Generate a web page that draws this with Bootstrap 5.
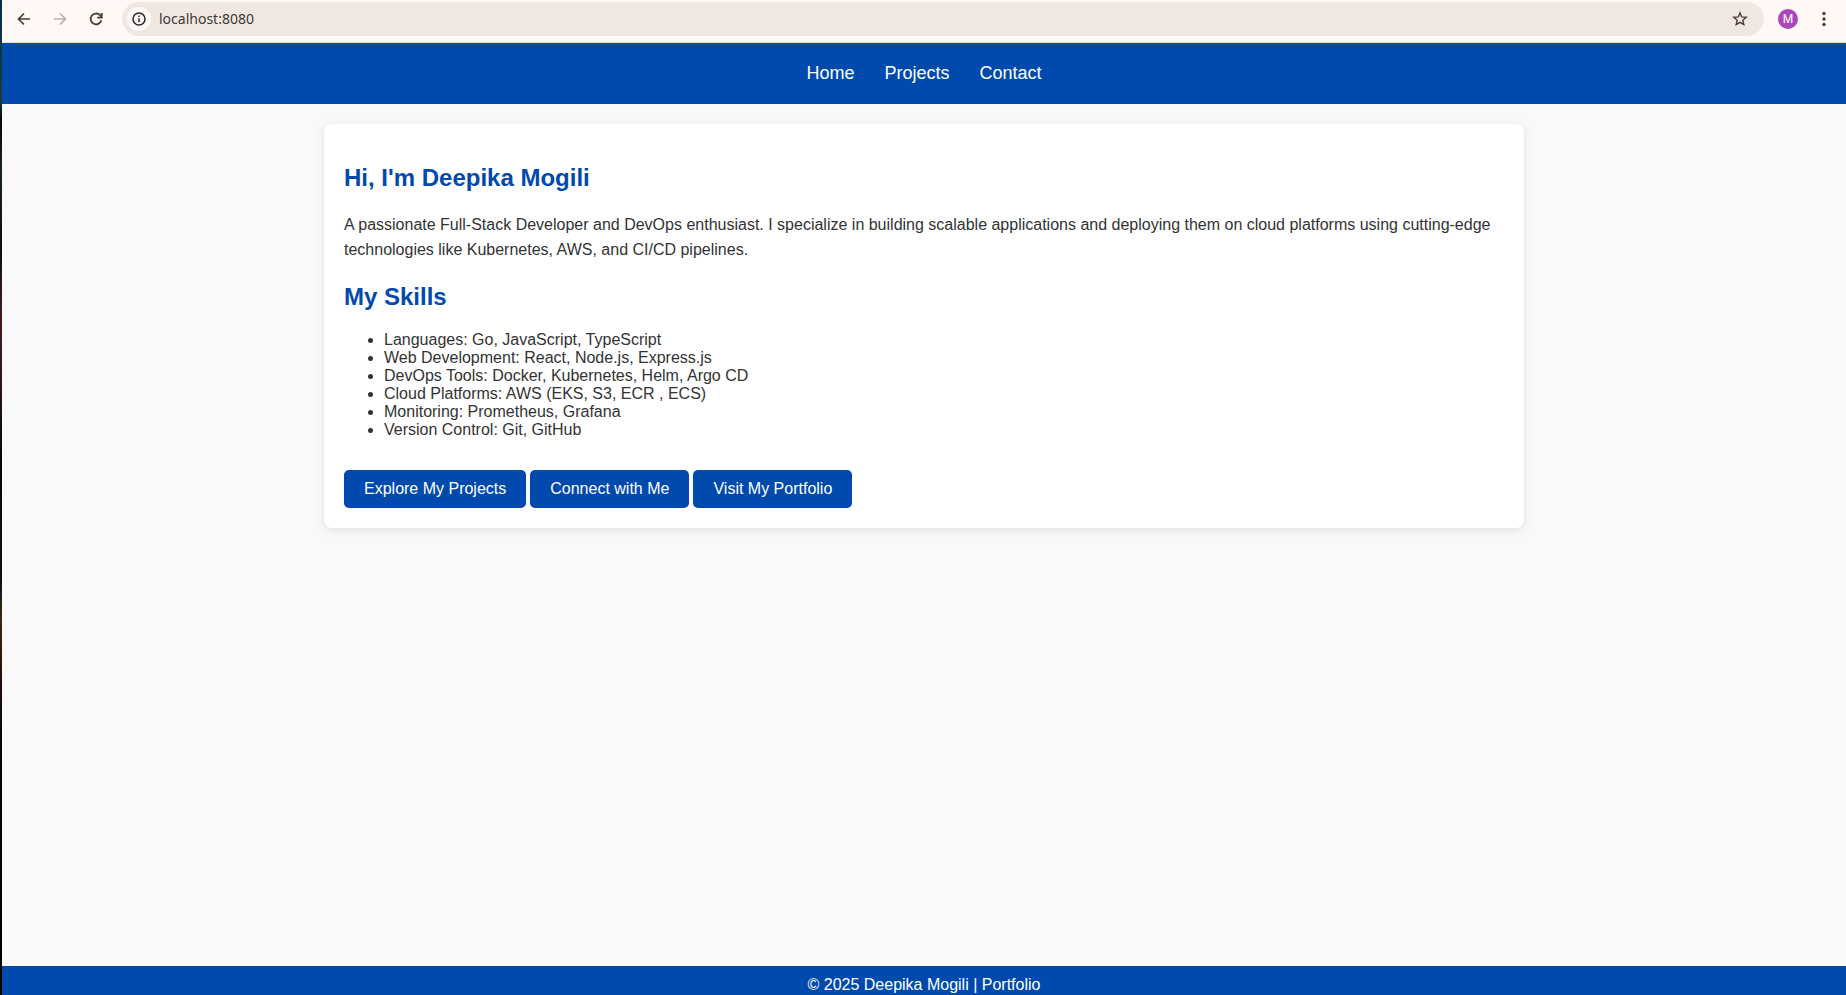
<!DOCTYPE html>
<html lang="en">
<head>
<meta charset="utf-8">
<meta name="viewport" content="width=device-width, initial-scale=1">
<title>Deepika Mogili | Portfolio</title>
<link href="https://cdn.jsdelivr.net/npm/bootstrap@5.3.0/dist/css/bootstrap.min.css" rel="stylesheet">
<style>
  :root { --brand: #004aad; --chrome: #fff8f5; --chrome-ink: #4d3d32; }
  body { font-family: "Liberation Sans", Arial, sans-serif; color: #333; background: #f9f9f9; }
  a { text-decoration: none; }

  /* Sliver of desktop along the left side of the window */
  .desktop-edge { width: 2px; background: linear-gradient(#00304f, #1d3a40 10%, #05080c 12%, #15232a 17%, #0b0f16 25%, #4a1c1c 32%, #30161a 38%, #05070c 46%, #0a0e14 58%, #3a2a10 62%, #2a0c08 68%, #05070c 74%, #000 100%); }

  /* Browser toolbar */
  .toolbar { background: var(--chrome); border-bottom: 1px solid #f0dfd2; gap: 14px; height: 43px; padding: 2px 10px 6px; color: var(--chrome-ink); }
  .tool-btn { width: 24px; height: 24px; padding: 0; border: 0; background: none; color: inherit; display: flex; align-items: center; justify-content: center; }
  .tool-btn:disabled { color: #b7aeaa; }
  .address { background: #f0e7e3; height: 34px; padding: 0 12px 0 5px; }
  .info-btn { width: 24px; height: 24px; background: var(--chrome); color: #2b2623; }
  .url { border: 0; background: none; outline: 0; padding: 0; font: 14px/20px "Noto Sans", sans-serif; color: #3f3935; }
  .avatar { width: 20px; height: 20px; background: #ab47bc; color: #fff; font: 400 12px/20px Roboto, sans-serif; }

  /* Page */
  .site-nav { background: var(--brand); padding: 20px 20px 21px; gap: 30px; font-size: 18px; line-height: 20px; }
  .site-nav a, .site-footer { color: #fff; }
  .intro { max-width: 1200px; margin: 20px auto; padding: 40px 20px 20px; border-radius: 8px; background: #fff; box-shadow: 0 2px 10px rgba(0, 0, 0, .1); }
  .intro h2 { color: var(--brand); font-size: 24px; line-height: 27px; font-weight: 700; margin: 0 0 21px; }
  .intro p { line-height: 25px; margin-bottom: 21px; }
  .skills { line-height: 18px; padding-left: 40px; margin-bottom: 31px; }
  .cta { gap: 4px; }
  .btn-brand { --bs-btn-color: #fff; --bs-btn-bg: var(--brand); --bs-btn-hover-color: #fff; --bs-btn-hover-bg: #003380; --bs-btn-border-width: 0; --bs-btn-padding-x: 20px; --bs-btn-padding-y: 10px; --bs-btn-line-height: 18px; --bs-btn-border-radius: 5px; }
  .site-footer { background: var(--brand); padding: 10px 10px 1px; line-height: 18px; }
</style>
</head>
<body>
<div class="d-flex min-vh-100">
  <div class="desktop-edge flex-shrink-0"></div>
  <div class="d-flex flex-column flex-grow-1">

    <div class="toolbar d-flex align-items-center">
      <div class="d-flex gap-2">
        <button class="tool-btn me-1" type="button" aria-label="Back"><svg width="14" height="14" viewBox="0 0 14 14" fill="none" stroke="currentColor" stroke-width="1.7"><path d="M13 7H2M7 1.5 1.5 7 7 12.5"/></svg></button>
        <button class="tool-btn me-1" type="button" aria-label="Forward" disabled><svg width="14" height="14" viewBox="0 0 14 14" fill="none" stroke="currentColor" stroke-width="1.7"><path d="M1 7h11M7 1.5 12.5 7 7 12.5"/></svg></button>
        <button class="tool-btn" type="button" aria-label="Reload"><svg width="14" height="14" viewBox="0 0 14 14" fill="none" stroke="currentColor" stroke-width="1.8"><path d="M12.3 8.3A5.4 5.4 0 1 1 11 3.2l1.5 1.6"/><path d="M12.7 1v4.6H8.2"/></svg></button>
      </div>
      <div class="address rounded-pill d-flex align-items-center flex-grow-1">
        <button class="tool-btn info-btn rounded-circle me-2" type="button" aria-label="Site information"><svg width="14" height="14" viewBox="0 0 14 14" fill="none" stroke="currentColor" stroke-width="1.5"><circle cx="7" cy="7" r="6"/><path d="M7 6.3v4M7 3.5v1.6"/></svg></button>
        <input class="url flex-grow-1" type="text" value="localhost:8080" aria-label="Address">
        <button class="tool-btn" type="button" aria-label="Bookmark"><svg width="16" height="16" viewBox="0 0 16 16" fill="none" stroke="currentColor" stroke-width="1.4"><path d="m8 1.8 1.7 4.1 4.5.4-3.4 2.9 1 4.4L8 11.3l-3.8 2.3 1-4.4-3.4-2.9 4.5-.4z"/></svg></button>
      </div>
      <button class="avatar border-0 p-0 rounded-circle text-center" type="button" aria-label="Profile">M</button>
      <button class="tool-btn" type="button" aria-label="Menu"><svg width="4" height="16" viewBox="0 0 4 16" fill="currentColor"><circle cx="2" cy="2.5" r="1.7"/><circle cx="2" cy="8" r="1.7"/><circle cx="2" cy="13.5" r="1.7"/></svg></button>
    </div>

    <nav class="site-nav d-flex justify-content-center">
      <a href="#home">Home</a>
      <a href="#projects">Projects</a>
      <a href="#contact">Contact</a>
    </nav>

    <main class="flex-grow-1">
      <section class="intro">
        <h2>Hi, I'm Deepika Mogili</h2>
        <p>A passionate Full-Stack Developer and DevOps enthusiast. I specialize in building scalable applications and deploying them on cloud platforms using cutting-edge technologies like Kubernetes, AWS, and CI/CD pipelines.</p>
        <h2>My Skills</h2>
        <ul class="skills">
          <li>Languages: Go, JavaScript, TypeScript</li>
          <li>Web Development: React, Node.js, Express.js</li>
          <li>DevOps Tools: Docker, Kubernetes, Helm, Argo CD</li>
          <li>Cloud Platforms: AWS (EKS, S3, ECR , ECS)</li>
          <li>Monitoring: Prometheus, Grafana</li>
          <li>Version Control: Git, GitHub</li>
        </ul>
        <div class="cta d-flex flex-wrap">
          <a class="btn btn-brand" href="#projects">Explore My Projects</a>
          <a class="btn btn-brand" href="#contact">Connect with Me</a>
          <a class="btn btn-brand" href="#portfolio">Visit My Portfolio</a>
        </div>
      </section>
    </main>

    <footer class="site-footer text-center">© 2025 Deepika Mogili | Portfolio</footer>
  </div>
</div>
<script src="https://cdn.jsdelivr.net/npm/bootstrap@5.3.0/dist/js/bootstrap.bundle.min.js"></script>
</body>
</html>
